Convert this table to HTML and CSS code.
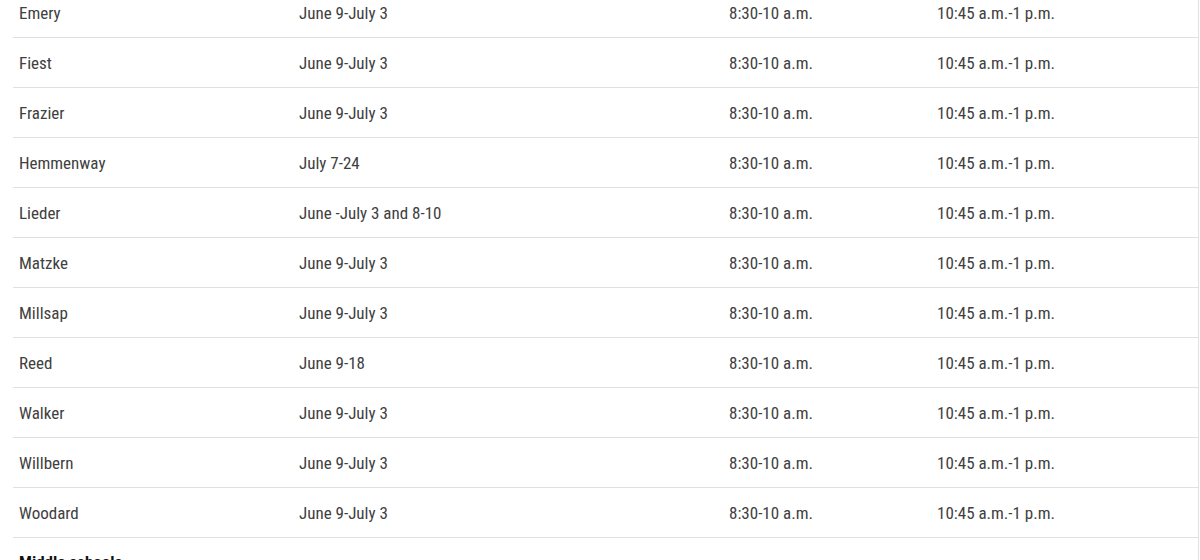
FILE: index.html
```html
<!DOCTYPE html>
<html lang="en">
<head>
    <meta charset="UTF-8">
    <meta name="viewport" content="width=device-width, initial-scale=1.0">
    <title>Summer school schedule</title>
    <link rel="stylesheet" href="styles.css">
</head>
<body>
    <div class="schedule">
        <table class="schedule-table">
            <colgroup>
                <col class="col-school">
                <col class="col-dates">
                <col class="col-first">
                <col class="col-second">
            </colgroup>
            <tbody>
                <tr><td>Emery</td><td>June 9-July 3</td><td>8:30-10 a.m.</td><td>10:45 a.m.-1 p.m.</td></tr>
                <tr><td>Fiest</td><td>June 9-July 3</td><td>8:30-10 a.m.</td><td>10:45 a.m.-1 p.m.</td></tr>
                <tr><td>Frazier</td><td>June 9-July 3</td><td>8:30-10 a.m.</td><td>10:45 a.m.-1 p.m.</td></tr>
                <tr><td>Hemmenway</td><td>July 7-24</td><td>8:30-10 a.m.</td><td>10:45 a.m.-1 p.m.</td></tr>
                <tr><td>Lieder</td><td>June -July 3 and 8-10</td><td>8:30-10 a.m.</td><td>10:45 a.m.-1 p.m.</td></tr>
                <tr><td>Matzke</td><td>June 9-July 3</td><td>8:30-10 a.m.</td><td>10:45 a.m.-1 p.m.</td></tr>
                <tr><td>Millsap</td><td>June 9-July 3</td><td>8:30-10 a.m.</td><td>10:45 a.m.-1 p.m.</td></tr>
                <tr><td>Reed</td><td>June 9-18</td><td>8:30-10 a.m.</td><td>10:45 a.m.-1 p.m.</td></tr>
                <tr><td>Walker</td><td>June 9-July 3</td><td>8:30-10 a.m.</td><td>10:45 a.m.-1 p.m.</td></tr>
                <tr><td>Willbern</td><td>June 9-July 3</td><td>8:30-10 a.m.</td><td>10:45 a.m.-1 p.m.</td></tr>
                <tr><td>Woodard</td><td>June 9-July 3</td><td>8:30-10 a.m.</td><td>10:45 a.m.-1 p.m.</td></tr>
                <tr class="group-row"><td colspan="4">Middle schools</td></tr>
            </tbody>
        </table>
    </div>
</body>
</html>
```
FILE: styles.css
```css
body {
    margin: 0;
    background: #fff;
    font-family: "Roboto Condensed", Roboto, sans-serif;
    color: #404040;
}
.schedule {
    margin-top: -12px;
    padding-left: 13px;
    border-right: 1px solid #e2e2e2;
    width: 1185px;
}
.schedule-table {
    width: 100%;
    border-collapse: collapse;
    font-size: 17px;
}
.col-school { width: 280px; }
.col-dates { width: 430px; }
.col-first { width: 208px; }
.col-second { width: 267px; }
.schedule-table td {
    height: 49px;
    padding: 0 6px;
    border-bottom: 1px solid #e0e0e0;
    vertical-align: middle;
}
.group-row td {
    height: auto;
    padding-top: 14px;
    vertical-align: top;
    font-weight: bold;
    color: #111;
    border-bottom: none;
}
```
